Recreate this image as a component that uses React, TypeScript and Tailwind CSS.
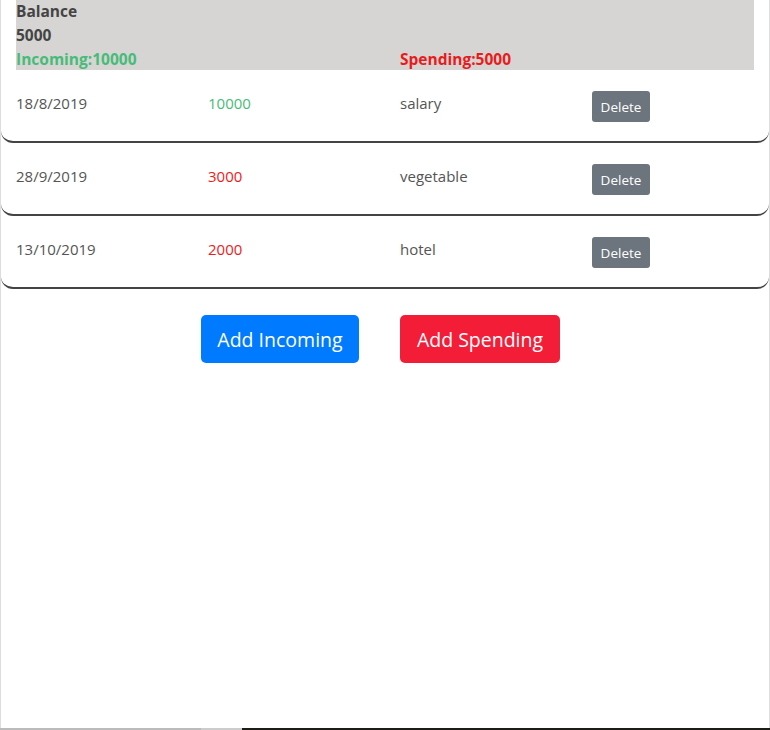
import React from "react";

type Entry = { date: string; amount: number; note: string; kind: "in" | "out" };

const entries: Entry[] = [
  { date: "18/8/2019", amount: 10000, note: "salary", kind: "in" },
  { date: "28/9/2019", amount: 3000, note: "vegetable", kind: "out" },
  { date: "13/10/2019", amount: 2000, note: "hotel", kind: "out" },
];

const font = { fontFamily: '"Segoe UI", "Open Sans", "Noto Sans", sans-serif' };

function Row({ e }: { e: Entry }) {
  return (
    <div className="grid grid-cols-4 rounded-b-[12px] border-b-2 border-[#444] pt-[21px] pb-[19px] text-[15px] leading-6 text-[#555]">
      <div className="pl-[15px]">{e.date}</div>
      <div className={`pl-[15px] ${e.kind === "in" ? "text-[#48bb78]" : "text-[#f01a1a]"}`}>
        {e.amount}
      </div>
      <div className="pl-[15px]">{e.note}</div>
      <div className="pl-[15px]">
        <button
          type="button"
          className="h-[31px] w-[58px] rounded-[3px] bg-[#6c757d] pt-px text-[13.5px] text-white"
        >
          Delete
        </button>
      </div>
    </div>
  );
}

export default function App() {
  const incoming = entries.filter((e) => e.kind === "in").reduce((s, e) => s + e.amount, 0);
  const spending = entries.filter((e) => e.kind === "out").reduce((s, e) => s + e.amount, 0);

  return (
    <div className="flex h-[730px] w-[770px] flex-col bg-white" style={font}>
      <div className="flex-1 border-x border-[#ddd]">
        <div className="mx-[15px] h-[70px] bg-[#d6d5d4] text-[15.5px] font-bold leading-[23.5px] text-[#444]">
          <div>Balance</div>
          <div>{incoming - spending}</div>
          <div className="flex pt-px">
            <div className="w-[384px] text-[#48bb78]">Incoming:{incoming}</div>
            <div className="text-[#e81c1c]">Spending:{spending}</div>
          </div>
        </div>

        {entries.map((e) => (
          <Row key={e.date} e={e} />
        ))}

        <div className="mt-[26px] flex gap-[41px] pl-[200px]">
          <button
            type="button"
            className="h-12 w-[158px] rounded-[5px] bg-[#007bff] pt-[2px] text-[19.5px] text-white"
          >
            Add Incoming
          </button>
          <button
            type="button"
            className="h-12 w-[160px] rounded-[5px] bg-[#f41d38] pt-[2px] text-[19.5px] text-white"
          >
            Add Spending
          </button>
        </div>
      </div>
      <div className="flex h-[2px]">
        <div className="w-[201px] bg-[#bbb]" />
        <div className="w-[41px] bg-[#ccc]" />
        <div className="flex-1 bg-[#1b1e14]" />
      </div>
    </div>
  );
}
